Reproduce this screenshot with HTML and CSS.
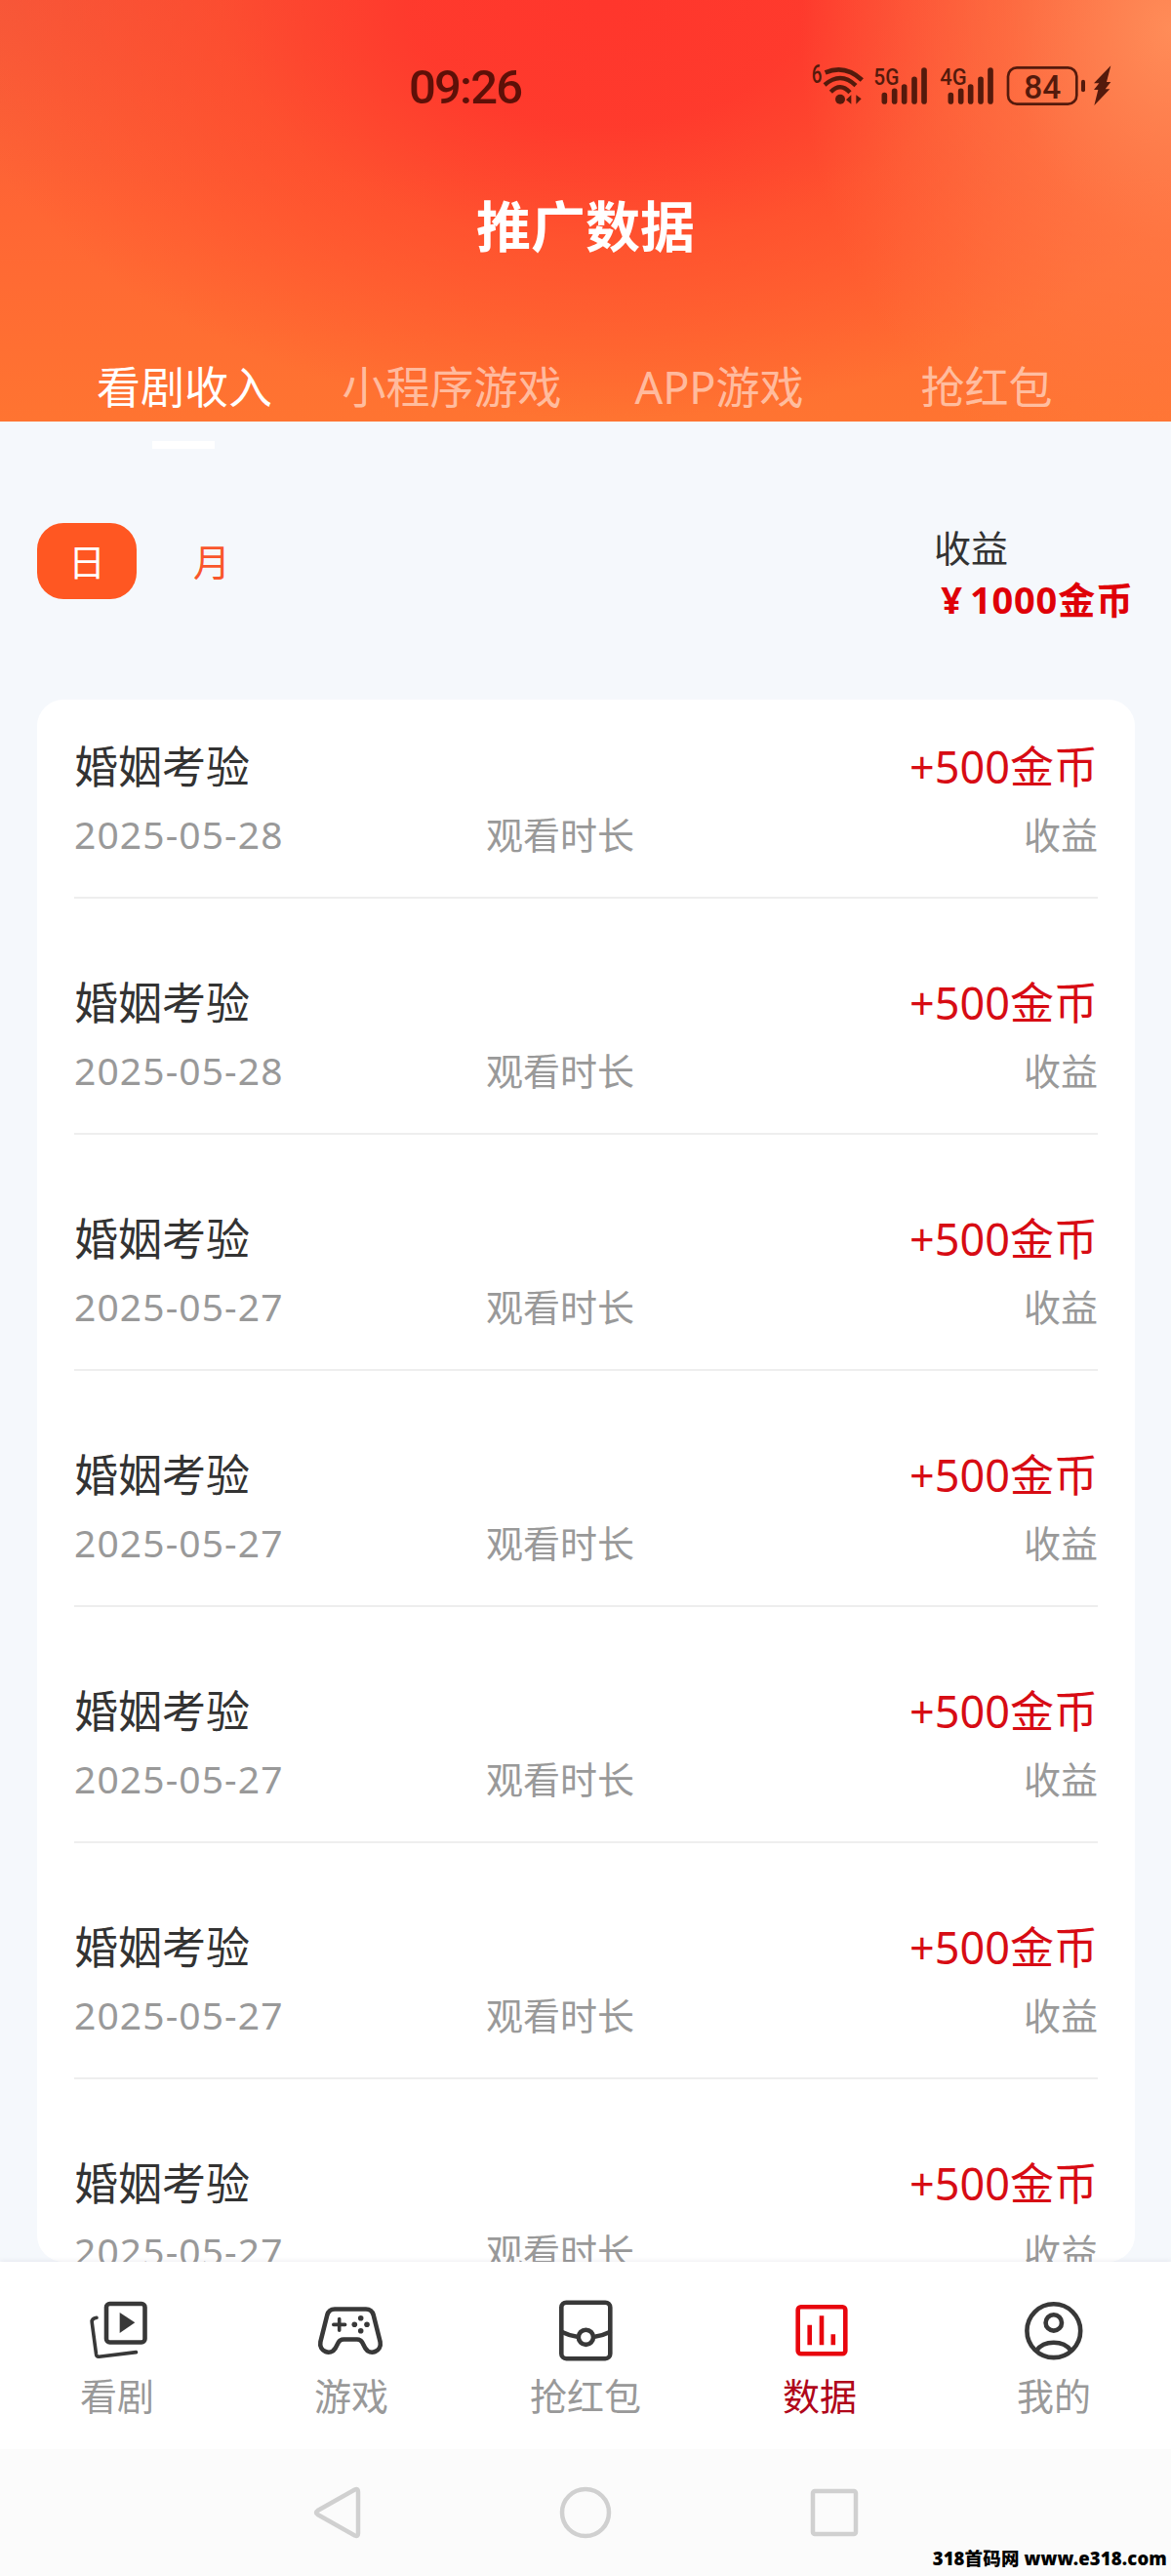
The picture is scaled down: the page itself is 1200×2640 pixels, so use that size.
FILE: index.html
```
<!DOCTYPE html>
<html lang="zh-CN">
<head>
  <meta charset="UTF-8">
  <meta name="viewport" content="width=device-width, initial-scale=1.0">
  <title>推广数据</title>
  <link rel="stylesheet" href="styles.css">
</head>
<body>
  <div class="screen">
    <header class="header">
      <div class="statusBar">
        <span class="time">09:26</span>
        <svg class="statusIcons" viewBox="90 60 930 150">
          <g fill="none" stroke="#541a0c" stroke-linecap="round">
            <path stroke-width="14" stroke-linecap="butt" d="M134 103Q195 77 247 126"/>
            <path stroke-width="13" stroke-linecap="butt" d="M132 141Q182 98 228 143"/>
            <path stroke-width="13" stroke-linecap="butt" d="M151 163Q180 132 210 164"/>
            <path stroke-width="17" d="M316 173v19M347 160v32M377 147v45M408 124v68M438 96v96"/>
            <path stroke-width="17" d="M520 173v19M551 160v32M581 147v45M612 124v68M642 96v96"/>
            <rect x="696" y="88" width="211" height="112" rx="27" stroke-width="8"/>
            <path stroke-width="12" d="M927 131v26"/>
          </g>
          <g fill="#541a0c">
            <circle cx="180" cy="185" r="15"/>
            <path d="M214 172v28l-16-13zM229 172v28l16-16z"/>
            <path d="M1012 82L960 136h16l-16 20h13l-12 48 48-50h-14l17-22h-13z"/>
            <text class="statusText" x="92" y="135" font-size="76" textLength="32" lengthAdjust="spacingAndGlyphs">6</text>
            <text class="statusText" x="283" y="140" font-size="72" textLength="78" lengthAdjust="spacingAndGlyphs">5G</text>
            <text class="statusText" x="487" y="140" font-size="72" textLength="82" lengthAdjust="spacingAndGlyphs">4G</text>
            <text class="statusText" x="745" y="182" font-size="102" textLength="114" lengthAdjust="spacingAndGlyphs">84</text>
          </g>
        </svg>
      </div>
      <h1>推广数据</h1>
      <nav class="tabs">
        <a class="tab is-active">看剧收入</a>
        <a class="tab">小程序游戏</a>
        <a class="tab">APP游戏</a>
        <a class="tab">抢红包</a>
      </nav>
    </header>

    <main class="content">
      <section class="summary">
        <div class="period">
          <button class="periodButton is-active">日</button>
          <button class="periodButton">月</button>
        </div>
        <div class="total">
          <p class="totalLabel">收益</p>
          <p class="totalValue"><span class="yen">¥</span>1000金币</p>
        </div>
      </section>

      <ul class="list">
        <li class="item">
          <div class="itemMain"><span>婚姻考验</span><span class="amount">+500金币</span></div>
          <div class="itemSub"><span class="date">2025-05-28</span><span>观看时长</span><span>收益</span></div>
        </li>
        <li class="item">
          <div class="itemMain"><span>婚姻考验</span><span class="amount">+500金币</span></div>
          <div class="itemSub"><span class="date">2025-05-28</span><span>观看时长</span><span>收益</span></div>
        </li>
        <li class="item">
          <div class="itemMain"><span>婚姻考验</span><span class="amount">+500金币</span></div>
          <div class="itemSub"><span class="date">2025-05-27</span><span>观看时长</span><span>收益</span></div>
        </li>
        <li class="item">
          <div class="itemMain"><span>婚姻考验</span><span class="amount">+500金币</span></div>
          <div class="itemSub"><span class="date">2025-05-27</span><span>观看时长</span><span>收益</span></div>
        </li>
        <li class="item">
          <div class="itemMain"><span>婚姻考验</span><span class="amount">+500金币</span></div>
          <div class="itemSub"><span class="date">2025-05-27</span><span>观看时长</span><span>收益</span></div>
        </li>
        <li class="item">
          <div class="itemMain"><span>婚姻考验</span><span class="amount">+500金币</span></div>
          <div class="itemSub"><span class="date">2025-05-27</span><span>观看时长</span><span>收益</span></div>
        </li>
        <li class="item">
          <div class="itemMain"><span>婚姻考验</span><span class="amount">+500金币</span></div>
          <div class="itemSub"><span class="date">2025-05-27</span><span>观看时长</span><span>收益</span></div>
        </li>
      </ul>
    </main>

    <nav class="tabbar">
      <a class="tabbarItem">
        <svg class="icon" viewBox="0 0 80 80">
          <rect x="29" y="13" width="39.5" height="39.5" rx="3.5"/>
          <path class="fill" d="M42.7 22L58.3 32.3L42.7 43z"/>
          <path class="thin" d="M19 27.3C15.5 27.8 13.8 29.5 14.2 32L18.6 65Q19 67.5 21.5 67.2L59.5 62.6"/>
        </svg>
        <span>看剧</span>
      </a>
      <a class="tabbarItem">
        <svg class="icon" viewBox="0 0 80 80">
          <path d="M23 18.5H55Q61 18.5 62.7 24.5L69.6 52C71.5 62 59 66.5 54.3 58.5L51.3 52.8Q49.6 49.5 46 49.5H32Q28.4 49.5 26.7 52.8L23.7 58.5C19 66.5 6.5 62 8.4 52L15.3 24.5Q17 18.5 23 18.5z"/>
          <path class="thin" d="M27.7 28.5v11.8M21.8 34.4h11.8"/>
          <g class="fill">
            <circle cx="49.7" cy="27.7" r="2.8"/>
            <circle cx="43.3" cy="34.3" r="2.8"/>
            <circle cx="56" cy="34.3" r="2.8"/>
            <circle cx="49.7" cy="40.7" r="2.8"/>
          </g>
        </svg>
        <span>游戏</span>
      </a>
      <a class="tabbarItem">
        <svg class="icon" viewBox="0 0 80 80">
          <rect x="15.3" y="11.7" width="50" height="57.5" rx="5"/>
          <circle cx="40.4" cy="47.3" r="7.6"/>
          <path d="M16 42Q24 46 32.5 47M64.8 42Q57 46 48.3 47"/>
        </svg>
        <span>抢红包</span>
      </a>
      <a class="tabbarItem is-active">
        <svg class="icon" viewBox="0 0 80 80">
          <rect x="17.7" y="16.2" width="48.6" height="48" rx="3"/>
          <path class="butt" d="M29.7 34.7V55.3M42 25.3V55.3M53.8 44.3V55.3"/>
        </svg>
        <span>数据</span>
      </a>
      <a class="tabbarItem">
        <svg class="icon" viewBox="0 0 80 80">
          <circle cx="39.8" cy="40.7" r="27.4"/>
          <circle cx="39.8" cy="32.4" r="8.2"/>
          <path d="M22 61C30 50 49.5 50 57.6 61"/>
        </svg>
        <span>我的</span>
      </a>
    </nav>

    <footer class="systemNav">
      <svg class="systemIcon" viewBox="0 0 56 56"><path d="M46.5 4.5Q50 3 50 6.5V49.5Q50 53 46.5 51.5L8.5 30Q5.5 28 8.5 26z"/></svg>
      <svg class="systemIcon" viewBox="0 0 56 56"><circle cx="28" cy="28" r="24"/></svg>
      <svg class="systemIcon" viewBox="0 0 56 56"><rect x="6" y="6" width="44" height="44" rx="2"/></svg>
      <span class="siteMark">318首码网 www.e318.com</span>
    </footer>
  </div>
</body>
</html>
```
FILE: styles.css
```
* {
  margin: 0;
  padding: 0;
  box-sizing: border-box;
}
body {
  font-family: "Noto Sans", "Noto Sans CJK SC", sans-serif;
  font-size: 38px;
  color: #333;
}
ul {
  list-style: none;
}
.screen {
  display: flex;
  flex-direction: column;
  width: 1200px;
  height: 2640px;
  overflow: hidden;
  background-color: #f5f8fc;
}

/* header */
.header {
  flex: none;
  height: 432px;
  background:
    radial-gradient(ellipse 380px 480px at 1200px 30px, rgba(255, 140, 88, 1), rgba(255, 128, 76, 0.55) 45%, rgba(255, 110, 60, 0) 100%),
    radial-gradient(ellipse 680px 430px at 620px 0, #ff362c 0%, rgba(255, 56, 44, 0.94) 30%, rgba(255, 70, 43, 0.62) 58%, rgba(255, 104, 47, 0) 100%),
    linear-gradient(#f6593a, #ff6634 50%, #ff7431);
}
.statusBar {
  display: flex;
  justify-content: space-between;
  align-items: center;
  height: 180px;
  padding: 0 59px 10px 419px;
}
.time {
  font-family: Roboto, sans-serif;
  font-size: 49px;
  font-weight: 500;
  letter-spacing: -1.8px;
  line-height: 60px;
  padding-top: 10px;
  color: #5e1008;
}
.statusIcons {
  width: 310px;
  height: 50px;
}
.statusText {
  font-family: Roboto, sans-serif;
  font-weight: 500;
}
h1 {
  height: 104px;
  line-height: 102px;
  font-size: 56px;
  font-weight: bold;
  text-align: center;
  color: #fff;
}
.tabs {
  display: flex;
  padding: 78px 52px 0;
}
.tab {
  position: relative;
  flex: 1;
  height: 70px;
  line-height: 70px;
  font-size: 45px;
  text-align: center;
  color: rgba(255, 255, 255, 0.55);
}
.tab.is-active {
  color: #fff;
}
.tab.is-active::after {
  content: "";
  position: absolute;
  left: 50%;
  bottom: -28px;
  width: 64px;
  height: 8px;
  margin-left: -33px;
  background-color: #fff;
}

/* content */
.content {
  flex: 1;
  min-height: 0;
  display: flex;
  flex-direction: column;
  padding: 0 37px 0 38px;
}
.summary {
  flex: none;
  display: flex;
  justify-content: space-between;
  height: 285px;
  padding-top: 104px;
}
.period {
  display: flex;
  gap: 26px;
}
.periodButton {
  width: 102px;
  height: 78px;
  padding-bottom: 4px;
  border: none;
  border-radius: 27px;
  background: none;
  font: inherit;
  color: #f9562b;
}
.periodButton.is-active {
  background-color: #ff5722;
  color: #fff;
}
.total {
  width: 206px;
  margin-top: -1px;
  line-height: 53px;
}
.totalValue {
  font-weight: bold;
  letter-spacing: 0.8px;
  white-space: nowrap;
  color: #df0008;
}
.yen {
  display: inline-block;
  width: 37px;
  text-align: center;
}
.list {
  flex: 1;
  min-height: 0;
  overflow: hidden;
  padding: 0 38px;
  border-radius: 27px;
  background-color: #fff;
}
.item {
  height: 242px;
  padding-top: 38px;
}
.item:not(:last-child) {
  background: linear-gradient(#eee, #eee) 0 202px / 100% 2px no-repeat;
}
.itemMain {
  display: flex;
  justify-content: space-between;
  font-size: 45px;
  line-height: 62px;
}
.amount {
  color: #d70c14;
}
.itemSub {
  display: grid;
  grid-template-columns: 422px 1fr auto;
  margin-top: 10px;
  line-height: 56px;
  color: #999;
}
.date {
  font-size: 39px;
  letter-spacing: 1.1px;
}

/* bottom bar */
.tabbar {
  flex: none;
  display: flex;
  height: 192px;
  padding-top: 30px;
  background-color: #fff;
  box-shadow: 0 -1px 5px rgba(40, 40, 80, 0.08);
}
.tabbarItem {
  flex: 1;
  display: flex;
  flex-direction: column;
  align-items: center;
  line-height: 55px;
  color: #999;
}
.icon {
  width: 80px;
  height: 80px;
  fill: none;
  stroke: #383838;
  stroke-width: 4.6;
  stroke-linecap: round;
  stroke-linejoin: round;
}
.icon .fill {
  fill: #383838;
  stroke: none;
}
.icon .thin {
  stroke-width: 3.6;
}
.icon .butt {
  stroke-linecap: butt;
}
.tabbarItem.is-active {
  color: #b0061a;
}
.tabbarItem.is-active .icon {
  stroke: #e8050d;
}

/* android navigation */
.systemNav {
  position: relative;
  flex: none;
  display: flex;
  justify-content: center;
  align-items: center;
  gap: 199px;
  height: 130px;
  background-color: #fbfbfb;
}
.systemIcon {
  width: 56px;
  height: 56px;
  fill: none;
  stroke: #d0d0d0;
  stroke-width: 4.5;
}
.siteMark {
  position: absolute;
  right: 4px;
  bottom: 4px;
  font-size: 18.5px;
  font-weight: 900;
  letter-spacing: 0.15px;
  line-height: 28px;
  white-space: nowrap;
  color: #000;
}
```
